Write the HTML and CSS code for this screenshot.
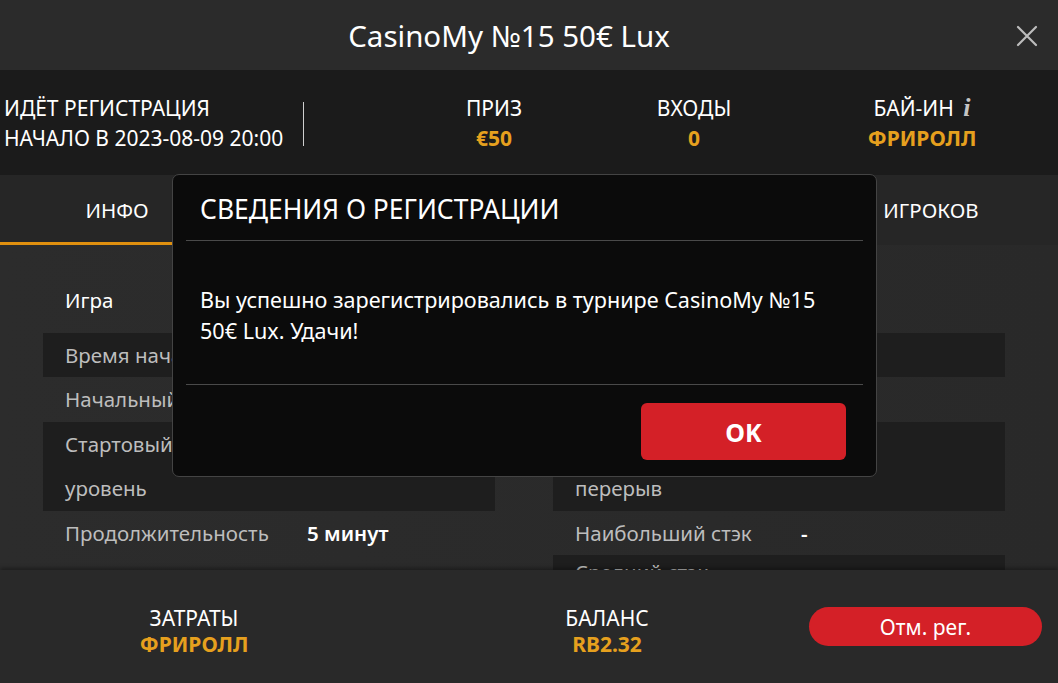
FILE: index.html
```html
<!DOCTYPE html>
<html lang="ru">
<head>
<meta charset="utf-8">
<title>CasinoMy №15 50€ Lux</title>
<link rel="stylesheet" href="styles.css">
</head>
<body>
<div class="app">
  <header class="topbar">
    <h1 class="title">CasinoMy №15 50€ Lux</h1>
    <button class="close" aria-label="Закрыть">
      <svg width="22" height="22" viewBox="0 0 22 22"><path d="M2 2L20 20M20 2L2 20" stroke="#bdbdbd" stroke-width="2.2" stroke-linecap="round"/></svg>
    </button>
  </header>

  <section class="infobar">
    <div class="status">
      <div>ИДЁТ РЕГИСТРАЦИЯ</div>
      <div>НАЧАЛО В 2023-08-09 20:00</div>
    </div>
    <div class="divider"></div>
    <div class="stats">
      <div class="stat s1"><div class="lbl">ПРИЗ</div><div class="val">€50</div></div>
      <div class="stat s2"><div class="lbl">ВХОДЫ</div><div class="val">0</div></div>
      <div class="stat s3"><div class="lbl">БАЙ-ИН <span class="info-i">i</span></div><div class="val">ФРИРОЛЛ</div></div>
    </div>
  </section>

  <nav class="tabs">
    <div class="tab active">ИНФО</div>
    <div class="tab">СТРУКТУРА</div>
    <div class="tab">ПРИЗЫ</div>
    <div class="tab last">ИГРОКОВ</div>
  </nav>

  <main class="content">
    <div class="table left">
      <div class="row head"><span class="k">Игра</span><span class="v">Холдем</span></div>
      <div class="row dark"><span class="k">Время начала</span><span class="v">20:00</span></div>
      <div class="row"><span class="k">Начальный стэк</span><span class="v">10000</span></div>
      <div class="row dark"><span class="k">Стартовый блайнд уровень</span><span class="v">50/100</span></div>
      <div class="row"><span class="k">Продолжительность</span><span class="v">5 минут</span></div>
    </div>
    <div class="table right">
      <div class="row head"><span class="k">&nbsp;</span><span class="v"></span></div>
      <div class="row dark"><span class="k">Игроков</span><span class="v">0</span></div>
      <div class="row"><span class="k">Ребаи</span><span class="v">Нет</span></div>
      <div class="row dark"><span class="k wrap">Следующий перерыв</span><span class="v">-</span></div>
      <div class="row"><span class="k">Наибольший стэк</span><span class="v">-</span></div>
      <div class="row dark last-row"><span class="k">Средний стэк</span><span class="v">-</span></div>
    </div>
  </main>

  <footer class="bottombar">
    <div class="cost"><div class="lbl">ЗАТРАТЫ</div><div class="val">ФРИРОЛЛ</div></div>
    <div class="balance"><div class="lbl">БАЛАНС</div><div class="val">RB2.32</div></div>
    <button class="unreg">Отм. рег.</button>
  </footer>

  <div class="modal" role="dialog">
    <div class="modal-title">СВЕДЕНИЯ О РЕГИСТРАЦИИ</div>
    <div class="modal-body">Вы успешно зарегистрировались в турнире CasinoMy №15<br>50€ Lux. Удачи!</div>
    <div class="modal-foot"><button class="ok">OK</button></div>
  </div>
</div>
</body>
</html>
```

FILE: styles.css
```css
* { box-sizing: border-box; }
html, body { margin: 0; padding: 0; }
body {
  width: 1058px;
  height: 683px;
  overflow: hidden;
  background: #2a2a2a;
  font-family: "Noto Sans", "Open Sans", sans-serif;
  color: #fff;
}
.app {
  position: relative;
  height: 683px;
  display: flex;
  flex-direction: column;
}
.topbar {
  height: 70px;
  flex: none;
  background: #2b2b2b;
  display: flex;
  align-items: center;
  justify-content: center;
  position: relative;
}
.title {
  margin: 0 40px 0 0;
  font-weight: 400;
  font-size: 29.5px;
  color: #fff;
}
.close {
  position: absolute;
  right: 20px;
  top: 25px;
  background: none;
  border: 0;
  padding: 0;
  width: 22px;
  height: 22px;
}
.infobar {
  height: 105px;
  flex: none;
  background: #1b1b1b;
  display: flex;
  align-items: center;
  font-size: 21px;
}
.status {
  padding-left: 4px;
  width: 303px;
  line-height: 30px;
  color: #fff;
}
.divider {
  width: 1px;
  height: 44px;
  background: #cfcfcf;
  margin-top: 2px;
}
.stats {
  display: flex;
  margin-left: 90px;
}
.stat {
  width: 200px;
  text-align: center;
  line-height: 30px;
}
.stat.s3 { width: 256px; }
.stat .lbl { color: #fff; }
.stat .val { color: #e6a01e; font-weight: 700; }
.info-i {
  font-family: "Liberation Serif", serif;
  font-style: italic;
  font-weight: 700;
  font-size: 26px;
  color: #c4c4c4;
  margin-left: 4px;
}
.tabs {
  height: 70px;
  flex: none;
  background: #262626;
  display: flex;
  font-size: 20.5px;
}
.tab {
  display: flex;
  align-items: center;
  justify-content: center;
  flex: 1;
  color: #fff;
  border-bottom: 3px solid transparent;
  padding-top: 2px;
}
.tab.active { flex: none; width: 234px; border-bottom-color: #e0900f; }
.tab.last { flex: none; width: 210px; margin-right: 22px; }
.content {
  flex: 1;
  min-height: 0;
  overflow: hidden;
  display: grid;
  grid-template-columns: 452px 452px;
  column-gap: 58px;
  padding: 33px 53px 0 43px;
  background: linear-gradient(90deg, #2c2c2c, #292929);
  font-size: 20.5px;
}
.table { display: flex; flex-direction: column; }
.row {
  display: grid;
  line-height: 44.5px;
  color: #bdbdbd;
}
.left .row { grid-template-columns: 242px 1fr; padding-left: 22px; }
.right .row { grid-template-columns: 226px 1fr; padding-left: 22px; }
.k { padding-right: 20px; }
.k.wrap { max-width: 130px; }
.row.dark { background: #1e1e1e; }
.row.head { color: #fff; padding-bottom: 10px; }
.row.last-row { line-height: 34px; }
.row .v { color: #fff; font-weight: 600; }
.row.head .v { font-weight: 400; }
.bottombar {
  height: 113px;
  flex: none;
  background: #292929;
  box-shadow: 0 -2px 4px rgba(0,0,0,0.35);
  display: flex;
  align-items: center;
  font-size: 21px;
  position: relative;
  padding-top: 8px;
}
.cost, .balance { text-align: center; line-height: 26px; }
.cost { width: 388px; }
.balance { width: 200px; margin-left: 119px; }
.bottombar .val { color: #e6a01e; font-weight: 700; }
.unreg {
  margin-left: 102px;
  margin-top: -8px;
  width: 233px;
  height: 39px;
  border: 0;
  border-radius: 20px;
  background: #d42027;
  color: #fff;
  font-family: inherit;
  font-size: 21px;
}
.modal {
  position: absolute;
  left: 172px;
  top: 174px;
  width: 705px;
  height: 303px;
  background: #0b0b0b;
  border: 1px solid #444;
  border-radius: 7px;
  padding: 0 13px;
  display: flex;
  flex-direction: column;
}
.modal-title {
  height: 66px;
  padding: 14px 0 0 14px;
  font-size: 26.4px;
  line-height: 40px;
  color: #fff;
  border-bottom: 1px solid #4a4a4a;
}
.modal-body {
  height: 144px;
  padding: 43px 0 0 14px;
  font-size: 21.6px;
  line-height: 31px;
  color: #fff;
  border-bottom: 1px solid #4a4a4a;
}
.modal-foot {
  display: flex;
  justify-content: flex-end;
  padding: 18px 17px 0 0;
}
.ok {
  width: 205px;
  height: 57px;
  border: 0;
  border-radius: 6px;
  background: #d42027;
  color: #fff;
  font-family: inherit;
  font-size: 25px;
  font-weight: 700;
}
```
